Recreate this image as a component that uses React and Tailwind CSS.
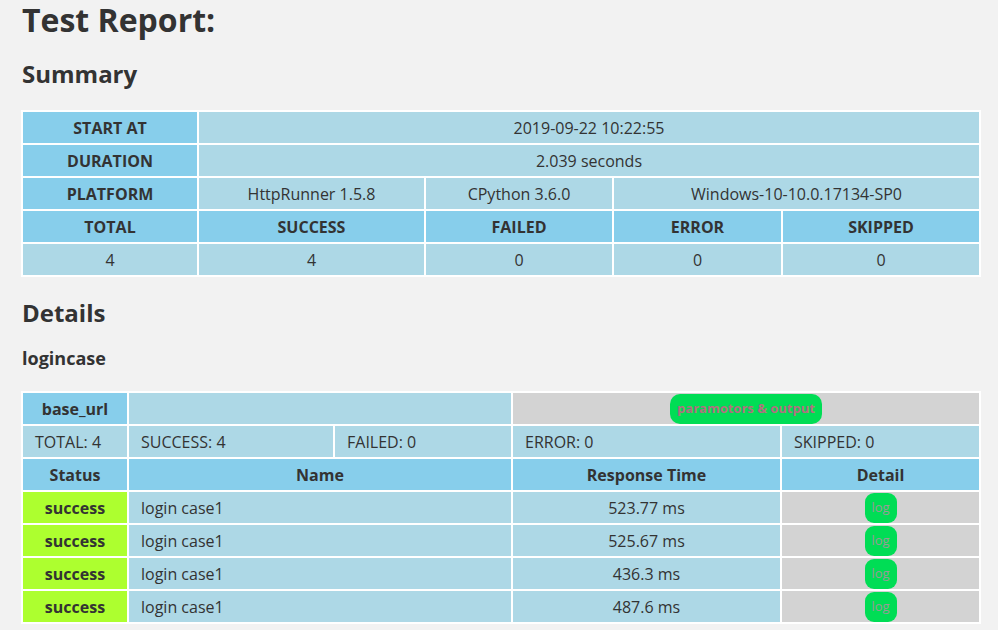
const summaryTop = [
  { label: 'START AT', value: '2019-09-22 10:22:55' },
  { label: 'DURATION', value: '2.039 seconds' },
];

const counts = [
  { label: 'TOTAL', value: 4 },
  { label: 'SUCCESS', value: 4 },
  { label: 'FAILED', value: 0 },
  { label: 'ERROR', value: 0 },
  { label: 'SKIPPED', value: 0 },
];

const records = [
  { status: 'success', name: 'login case1', time: '523.77 ms' },
  { status: 'success', name: 'login case1', time: '525.67 ms' },
  { status: 'success', name: 'login case1', time: '436.3 ms' },
  { status: 'success', name: 'login case1', time: '487.6 ms' },
];

const th = 'bg-[#87ceeb] font-bold text-center h-[31px] p-0';
const td = 'bg-[#add8e6] text-center h-[31px] p-0';
const tdl = 'bg-[#add8e6] text-left pl-[12px] h-[31px] py-0';

export default function App() {
  return (
    <div className="min-h-[630px] bg-[#f2f2f2] px-[21px] pt-[2px] text-[#333] font-['Open_Sans',sans-serif] text-[16px]">
      <h1 className="text-[32px] font-bold leading-[36px] pl-px">Test Report:</h1>

      <h2 className="text-[24px] font-bold mt-[20px] mb-[20px] leading-[32px] pl-px">Summary</h2>
      <table className="w-[960px] table-fixed border-separate border-spacing-[2px] bg-white">
        <colgroup>
          <col className="w-[174px]" />
          <col className="w-[225px]" />
          <col className="w-[186px]" />
          <col className="w-[167px]" />
          <col className="w-[196px]" />
        </colgroup>
        <tbody>
          {summaryTop.map((r) => (
            <tr key={r.label}>
              <th className={th}>{r.label}</th>
              <td className={td} colSpan={4}>{r.value}</td>
            </tr>
          ))}
          <tr>
            <th className={th}>PLATFORM</th>
            <td className={td}>HttpRunner 1.5.8</td>
            <td className={td}>CPython 3.6.0</td>
            <td className={td} colSpan={2}>Windows-10-10.0.17134-SP0</td>
          </tr>
          <tr>
            {counts.map((c) => (
              <th key={c.label} className={th}>{c.label}</th>
            ))}
          </tr>
          <tr>
            {counts.map((c) => (
              <td key={c.label} className={td}>{c.value}</td>
            ))}
          </tr>
        </tbody>
      </table>

      <h2 className="text-[24px] font-bold mt-[20px] leading-[32px] pl-px">Details</h2>
      <h3 className="text-[18px] font-bold mt-[16px] mb-[20px] leading-[26px] pl-px">logincase</h3>
      <table className="w-[960px] table-fixed border-separate border-spacing-[2px] bg-white">
        <colgroup>
          <col className="w-[104px]" />
          <col className="w-[204px]" />
          <col className="w-[176px]" />
          <col className="w-[267px]" />
          <col className="w-[197px]" />
        </colgroup>
        <tbody>
          <tr>
            <th className={th}>base_url</th>
            <td className={td} colSpan={2}></td>
            <td className="bg-[#d3d3d3] h-[31px] p-0 text-center" colSpan={2}>
              <button className="bg-[#00dd55] text-[#b07080] text-[13px] font-bold rounded-[10px] h-[30px] w-[152px] align-middle">
                paramotors &amp; output
              </button>
            </td>
          </tr>
          <tr>
            <td className={tdl}>TOTAL: 4</td>
            <td className={tdl}>SUCCESS: 4</td>
            <td className={tdl}>FAILED: 0</td>
            <td className={tdl}>ERROR: 0</td>
            <td className={tdl}>SKIPPED: 0</td>
          </tr>
          <tr>
            <th className={th}>Status</th>
            <th className={th} colSpan={2}>Name</th>
            <th className={th}>Response Time</th>
            <th className={th}>Detail</th>
          </tr>
          {records.map((r, i) => (
            <tr key={i}>
              <td className="bg-[#adff2f] font-bold text-center h-[31px] p-0">{r.status}</td>
              <td className={tdl} colSpan={2}>{r.name}</td>
              <td className={td}>{r.time}</td>
              <td className="bg-[#d3d3d3] h-[31px] p-0 text-center">
                <button className="bg-[#00dd55] text-[#999] text-[13px] rounded-[9px] h-[30px] w-[32px] align-middle">
                  log
                </button>
              </td>
            </tr>
          ))}
        </tbody>
      </table>
    </div>
  );
}
